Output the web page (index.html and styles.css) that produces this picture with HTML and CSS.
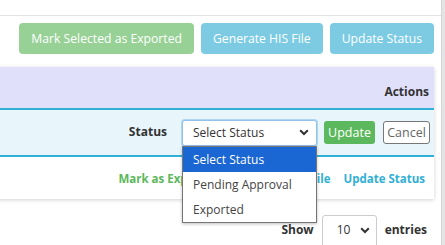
FILE: index.html
```html
<!DOCTYPE html>
<html lang="en">
<head>
    <meta charset="UTF-8">
    <meta name="viewport" content="width=device-width, initial-scale=1.0">
    <title>Exports</title>
    <link rel="stylesheet" href="styles.css">
</head>
<body>
    <div class="page">
        <div class="main">
            <div class="topbar"></div>
            <div class="toolbar">
                <button class="btn btn-success disabled">Mark Selected as Exported</button>
                <button class="btn btn-info disabled">Generate HIS File</button>
                <button class="btn btn-info disabled">Update Status</button>
            </div>
            <div class="panel">
                <div class="panel-head">Actions</div>
                <div class="edit-row">
                    <span class="label">Status</span>
                    <div class="select-wrap">
                        <div class="select focus">
                            <span>Select Status</span>
                            <svg class="chev" width="10" height="7" viewBox="0 0 10 7"><path d="M1.2 1.3 L5 5 L8.8 1.3" fill="none" stroke="#333" stroke-width="2"/></svg>
                        </div>
                        <ul class="dropdown">
                            <li class="active">Select Status</li>
                            <li>Pending Approval</li>
                            <li>Exported</li>
                        </ul>
                    </div>
                    <button class="btn-sm btn-update">Update</button>
                    <button class="btn-sm btn-cancel">Cancel</button>
                </div>
                <div class="link-row">
                    <a href="#" class="link-green">Mark as Exported</a>
                    <a href="#">Generate HIS File</a>
                    <a href="#">Update Status</a>
                </div>
            </div>
            <div class="length">
                <span class="label">Show</span>
                <div class="select small">
                    <span>10</span>
                    <svg class="chev" width="10" height="7" viewBox="0 0 10 7"><path d="M1.2 1.3 L5 5 L8.8 1.3" fill="none" stroke="#333" stroke-width="2"/></svg>
                </div>
                <span class="label">entries</span>
            </div>
        </div>
        <div class="scrollbar"></div>
    </div>
</body>
</html>
```

FILE: styles.css
```css
body {
    margin: 0;
    font-family: "Open Sans", "DejaVu Sans", sans-serif;
    font-size: 12px;
    color: #333;
    background-color: #fff;
    overflow: hidden;
}
.page {
    display: flex;
    height: 245px;
    overflow: hidden;
}
.main {
    flex: 1;
    min-width: 0;
}
.scrollbar {
    width: 3px;
    background-color: #e4e4e4;
    border-left: 1px solid #d6d6d6;
}
.topbar {
    height: 15px;
    border-bottom: 1px solid #e2e2e2;
}
.toolbar {
    display: flex;
    justify-content: flex-end;
    gap: 7px;
    padding: 7px 7px 0 0;
}
.btn {
    flex-shrink: 0;
    white-space: nowrap;
    height: 31px;
    padding: 0 12px;
    border: none;
    border-radius: 4px;
    font-family: inherit;
    font-size: 12.2px;
    color: #fff;
}
.btn-success {
    background-color: #97d196;
}
.btn-info {
    background-color: #7ccbe3;
}
.panel {
    margin: 13px 7px 0 -10px;
    box-shadow: 0 1px 4px rgba(0, 0, 0, 0.18);
    position: relative;
}
.panel-head {
    height: 43px;
    box-sizing: border-box;
    padding: 16px 5px 0 0;
    line-height: 18px;
    text-align: right;
    font-weight: bold;
    background-color: #e1e0fb;
    border-bottom: 2px solid #31b0d5;
}
.edit-row {
    display: flex;
    justify-content: flex-end;
    align-items: center;
    height: 45px;
    padding-right: 4px;
    background-color: #e8f6fb;
    border-bottom: 2px solid #31b0d5;
}
.label {
    font-weight: bold;
    white-space: nowrap;
}
.edit-row .label {
    margin-right: 15px;
    margin-top: -2px;
}
.select-wrap {
    position: relative;
    margin-right: 7px;
}
.select {
    display: flex;
    align-items: center;
    justify-content: space-between;
    box-sizing: border-box;
    width: 135px;
    height: 26px;
    padding: 0 7px 0 10px;
    background-color: #fff;
    border: 1px solid #aaa;
    border-radius: 3px;
    white-space: nowrap;
}
.select.focus {
    border-color: #94c1e8;
    box-shadow: 0 0 0 1px rgba(102, 175, 233, 0.45);
}
.dropdown {
    position: absolute;
    left: 0;
    top: 26px;
    width: 135px;
    box-sizing: border-box;
    margin: 0;
    padding: 0;
    list-style: none;
    background-color: #fff;
    border: 1px solid #767676;
    box-shadow: 0 1px 3px rgba(0, 0, 0, 0.25);
    z-index: 2;
}
.dropdown li {
    height: 25px;
    line-height: 25px;
    padding-left: 10px;
    color: #444;
    white-space: nowrap;
}
.dropdown li.active {
    background-color: #1a66d2;
    color: #fff;
}
.btn-sm {
    flex-shrink: 0;
    height: 23px;
    padding: 0;
    border-radius: 3px;
    font-family: inherit;
    font-size: 12.5px;
}
.btn-update {
    width: 51px;
    border: none;
    color: #fff;
    background-color: #5cb85c;
    margin-right: 8px;
}
.btn-cancel {
    width: 47px;
    border: 1px solid #777;
    color: #666;
    background-color: #fff;
}
.link-row {
    display: flex;
    justify-content: flex-end;
    align-items: center;
    gap: 13px;
    height: 42px;
    padding-right: 9px;
    background-color: #fff;
    white-space: nowrap;
}
.link-row a {
    font-weight: bold;
    font-size: 11.5px;
    color: #31b0d5;
    text-decoration: none;
}
.link-row a.link-green {
    color: #5cb85c;
}
.length {
    display: flex;
    justify-content: flex-end;
    align-items: flex-start;
    gap: 8px;
    padding: 16px 14px 0 0;
}
.length .label {
    line-height: 30px;
}
.select.small {
    width: 55px;
    height: 34px;
    padding: 0 6px 0 14px;
    border-color: #ccc;
    align-items: flex-start;
    padding-top: 5px;
}
.select.small .chev {
    margin-top: 6px;
}
```
